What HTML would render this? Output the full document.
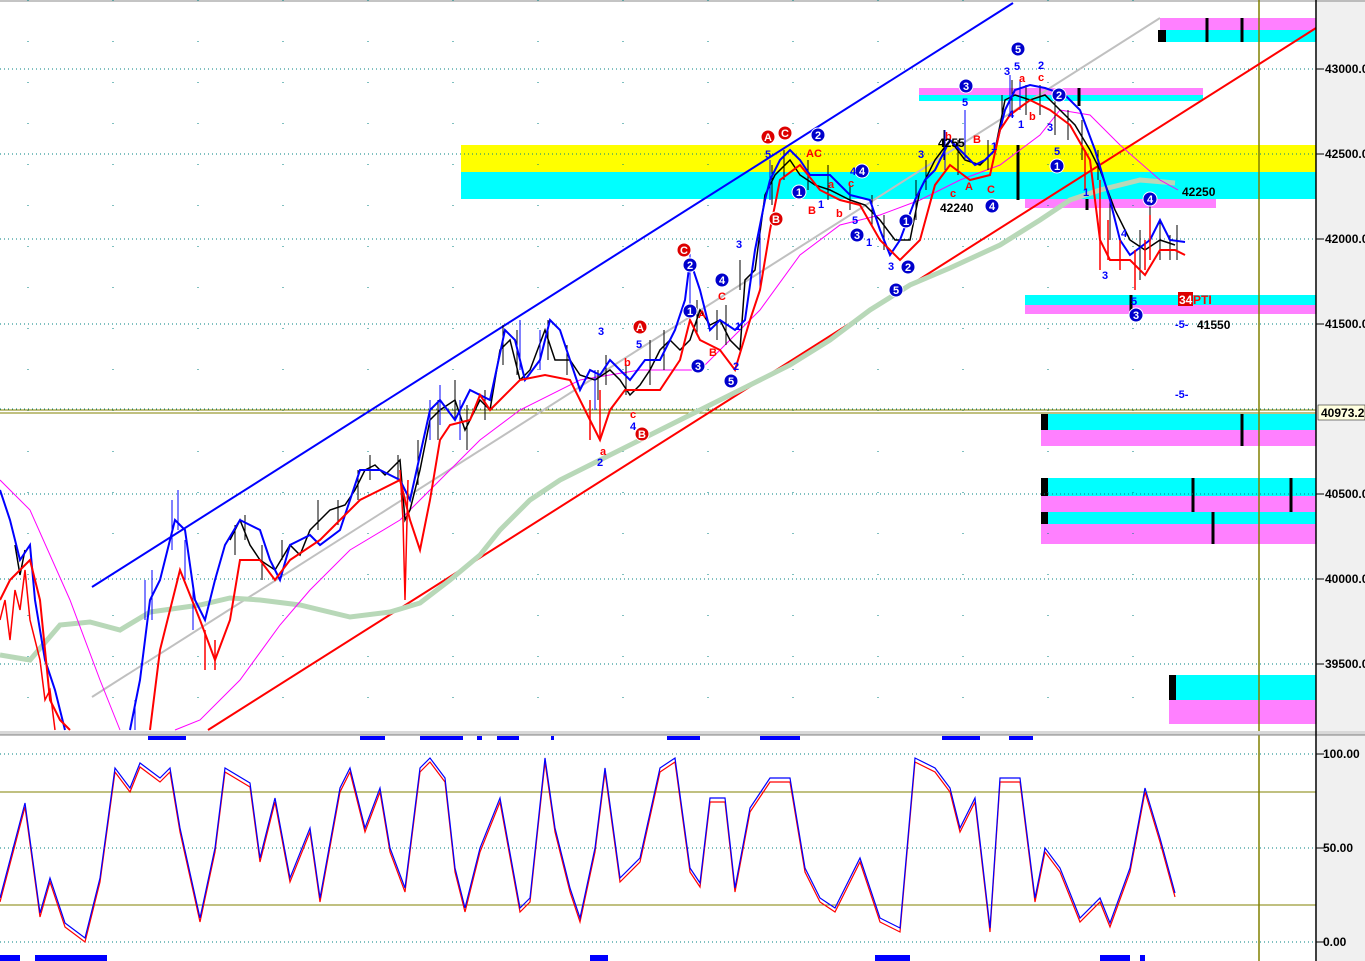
<!DOCTYPE html>
<html><head><meta charset="utf-8"><style>
html,body{margin:0;padding:0;background:#fff;}
svg{display:block;font-family:"Liberation Sans",sans-serif;}
</style></head><body>
<svg width="1365" height="961" viewBox="0 0 1365 961" xmlns="http://www.w3.org/2000/svg">
<rect x="0" y="0" width="1365" height="961" fill="#fff"/>
<rect x="1317" y="0" width="48" height="961" fill="#f0f0f0"/>
<line x1="0" y1="1" x2="1365" y2="1" stroke="#888"/>
<!-- zones -->
<rect x="461" y="145" width="855" height="27" fill="#ffff00"/>
<rect x="461" y="172" width="855" height="27" fill="#00ffff"/>
<rect x="1160" y="18" width="156" height="12" fill="#ff80ff"/>
<rect x="1160" y="30" width="156" height="12" fill="#00ffff"/>
<rect x="1158" y="30" width="8" height="12" fill="#000"/>
<rect x="919" y="88" width="284" height="7" fill="#ff80ff"/>
<rect x="919" y="95" width="284" height="6" fill="#00ffff"/>
<rect x="1025" y="199" width="191" height="9" fill="#ff80ff"/>
<rect x="1025" y="295" width="291" height="10" fill="#00ffff"/>
<rect x="1025" y="305" width="291" height="9" fill="#ff80ff"/>
<rect x="1041" y="414" width="275" height="16" fill="#00ffff"/>
<rect x="1041" y="430" width="275" height="16" fill="#ff80ff"/>
<rect x="1041" y="414" width="7" height="16" fill="#000"/>
<rect x="1041" y="478" width="275" height="18" fill="#00ffff"/>
<rect x="1041" y="496" width="275" height="16" fill="#ff80ff"/>
<rect x="1041" y="512" width="275" height="12" fill="#00ffff"/>
<rect x="1041" y="524" width="275" height="20" fill="#ff80ff"/>
<rect x="1041" y="478" width="7" height="18" fill="#000"/>
<rect x="1041" y="512" width="7" height="12" fill="#000"/>
<rect x="1169" y="675" width="147" height="25" fill="#00ffff"/>
<rect x="1169" y="700" width="147" height="24" fill="#ff80ff"/>
<rect x="1169" y="675" width="7" height="25" fill="#000"/>
<g stroke="#000" stroke-width="3">
<line x1="1207" y1="18" x2="1207" y2="42"/><line x1="1242" y1="18" x2="1242" y2="42"/>
<line x1="1242" y1="414" x2="1242" y2="446"/><line x1="1193" y1="478" x2="1193" y2="512"/>
<line x1="1291" y1="478" x2="1291" y2="512"/><line x1="1213" y1="512" x2="1213" y2="544"/>
<line x1="1079" y1="88" x2="1079" y2="106"/><line x1="1018" y1="145" x2="1018" y2="200"/>
<line x1="1087" y1="199" x2="1087" y2="210"/><line x1="1131" y1="295" x2="1131" y2="316"/>
</g>
<!-- grid -->
<g stroke="#008080" stroke-width="1" stroke-dasharray="1,3">
<line x1="0" y1="69" x2="1316" y2="69"/><line x1="0" y1="154" x2="1316" y2="154"/>
<line x1="0" y1="239" x2="1316" y2="239"/><line x1="0" y1="324" x2="1316" y2="324"/>
<line x1="0" y1="409" x2="1316" y2="409"/><line x1="0" y1="494" x2="1316" y2="494"/>
<line x1="0" y1="579" x2="1316" y2="579"/><line x1="0" y1="664" x2="1316" y2="664"/>
<line x1="0" y1="754" x2="1316" y2="754"/><line x1="0" y1="848" x2="1316" y2="848"/>
<line x1="0" y1="942" x2="1316" y2="942"/>
</g>
<g stroke="#008080" stroke-width="1" stroke-dasharray="1,40">
<line x1="28" y1="0" x2="28" y2="730"/><line x1="113" y1="0" x2="113" y2="730"/><line x1="198" y1="0" x2="198" y2="730"/><line x1="283" y1="0" x2="283" y2="730"/><line x1="368" y1="0" x2="368" y2="730"/><line x1="453" y1="0" x2="453" y2="730"/><line x1="538" y1="0" x2="538" y2="730"/><line x1="623" y1="0" x2="623" y2="730"/><line x1="708" y1="0" x2="708" y2="730"/><line x1="793" y1="0" x2="793" y2="730"/><line x1="878" y1="0" x2="878" y2="730"/><line x1="963" y1="0" x2="963" y2="730"/><line x1="1048" y1="0" x2="1048" y2="730"/><line x1="1133" y1="0" x2="1133" y2="730"/>
</g>
<line x1="1259" y1="0" x2="1259" y2="961" stroke="#808000" stroke-width="1.5"/>
<line x1="0" y1="410" x2="1316" y2="410" stroke="#808000"/>
<line x1="0" y1="413" x2="1316" y2="413" stroke="#808000"/>
<line x1="0" y1="792" x2="1316" y2="792" stroke="#808000"/>
<line x1="0" y1="905" x2="1316" y2="905" stroke="#808000"/>
<!-- channel lines -->
<line x1="92" y1="587" x2="1013" y2="3" stroke="#0000ff" stroke-width="2"/>
<line x1="208" y1="730" x2="1316" y2="28" stroke="#ff0000" stroke-width="2"/>
<line x1="92" y1="697" x2="1160" y2="18" stroke="#c0c0c0" stroke-width="2"/>
<path fill="none" stroke="#b8d8b8" stroke-width="5" d="M0,655 30,660 60,625 90,622 120,630 150,612 200,605 230,598 260,600 300,605 350,617 390,612 420,603 450,580 480,555 500,530 530,500 560,480 600,460 640,440 680,420 720,400 760,380 790,365 830,340 870,310 910,285 950,268 1000,245 1040,220 1070,200 1100,190 1140,180 1175,183"/>
<path fill="none" stroke="#ff00ff" stroke-width="1" d="M0,480 30,510 70,600 100,680 120,730 M175,730 200,720 240,680 280,625 310,590 350,550 400,520 430,490 480,440 520,410 580,380 640,370 700,370 760,310 800,255 840,225 880,215 920,200 960,180 1000,165 1040,135 1060,110 1090,115 1120,145 1160,180 1178,190"/>
<!-- black price -->
<path fill="none" stroke="#000" stroke-width="1.5" d="M15,545 20,575 25,550 M230,540 240,520 250,545 260,560 275,570 290,545 300,555 310,530 320,520 330,510 345,505 355,490 365,470 375,465 385,475 400,460 405,520 410,510 420,470 430,420 440,410 455,400 465,430 480,400 490,410 500,350 510,340 520,380 530,370 545,330 555,360 570,360 580,375 595,380 610,370 620,380 630,395 640,385 650,370 660,350 670,340 680,350 690,340 700,310 710,325 720,320 730,340 740,350 745,280 755,270 765,195 775,175 790,160 800,175 815,185 830,190 850,200 865,205 880,220 895,240 910,240 920,190 935,160 950,140 965,160 980,165 995,150 1005,100 1015,95 1030,100 1045,95 1060,110 1075,125 1090,150 1100,170 1115,210 1130,240 1145,250 1160,240 1175,245"/>
<path fill="none" stroke="#000" stroke-width="1" d="M235,525v30M245,515v25M262,545v35M282,540v20M318,500v30M338,500v25M358,470v30M370,455v25M398,455v25M418,440v45M438,400v40M455,380v40M467,405v45M485,390v30M503,325v40M517,330v45M548,320v40M567,345v30M598,370v30M606,355v30M626,365v30M650,340v45M664,330v40M697,300v35M717,310v30M726,305v40M740,260v30M760,250v40M772,165v40M784,150v30M808,160v30M828,165v35M850,185v25M872,195v30M884,215v35M916,180v40M926,160v30M944,130v30M958,140v35M988,140v30M1002,95v30M1012,80v35M1026,85v30M1040,85v30M1055,95v40M1068,110v30M1082,120v40M1098,150v30M1110,200v40M1140,230v50M1150,200v60M1160,220v40M1170,235v25M1177,225v35"/>
<path fill="none" stroke="#0000ff" stroke-width="2" d="M0,490 10,520 20,560 30,545 35,600 45,660 55,690 65,730 M130,730 140,680 150,600 160,580 175,520 185,530 195,600 205,620 215,580 225,545 240,520 260,530 270,560 280,580 290,545 300,540 310,535 320,545 340,530 360,470 380,470 400,480 410,500 420,455 430,410 440,400 455,420 470,390 490,400 505,330 515,340 525,380 540,360 550,320 560,330 570,360 580,390 590,370 600,375 610,360 630,380 645,360 660,360 675,330 685,300 690,260 700,290 710,330 720,320 735,330 745,320 755,250 765,200 770,180 780,160 790,150 800,160 810,175 830,175 850,195 870,200 880,230 890,255 900,240 915,200 925,180 935,170 950,140 960,150 975,165 985,160 995,150 1005,110 1015,90 1030,85 1045,88 1065,95 1080,110 1095,150 1110,200 1120,240 1130,255 1150,240 1160,220 1170,240 1185,242"/>
<path fill="none" stroke="#0000ff" stroke-width="1" d="M135,700v30M145,580v40M152,570v50M172,500v50M178,490v40M185,540v40M193,590v40M430,400v40M440,385v40M460,400v40M520,320v50M540,330v40M595,370v40M690,250v60M760,230v60M770,160v40M945,130v40M965,110v50M1010,75v40M1020,80v30"/>
<path fill="none" stroke="#ff0000" stroke-width="2" d="M0,600 10,580 20,570 30,560 40,600 50,700 60,720 70,730 M150,730 160,650 170,610 180,570 200,620 215,660 230,620 240,560 260,560 275,580 290,560 320,540 340,520 360,500 380,490 400,480 410,520 420,550 430,500 440,440 450,425 470,420 480,395 490,410 500,400 520,380 545,375 570,380 590,420 600,440 610,410 625,390 640,390 660,390 680,360 690,320 700,340 720,350 735,370 750,320 760,290 770,230 780,180 800,165 820,190 840,200 860,205 880,240 900,260 920,240 935,185 950,165 970,180 990,175 1000,130 1010,115 1030,100 1050,110 1070,125 1090,160 1100,240 1110,260 1130,260 1145,275 1160,250 1175,250 1185,255"/>
<path fill="none" stroke="#ff0000" stroke-width="1.5" d="M0,620 5,600 10,640 15,590 20,610 25,570 30,620 40,660 45,700 50,690 55,730 M400,470 403,520 405,600 408,480 M590,400v40M600,390v50M205,630v40M215,640v30M1100,180v90M1108,220v40M1120,240v30M1135,250v40M1145,240v30M1150,215v45M1085,150v40"/>
<!-- markers -->
<g font-weight="bold" font-size="11" text-anchor="middle">
<g fill="#0000cc" stroke="#fff" stroke-width="1">
<circle cx="818" cy="135" r="7"/><circle cx="1018" cy="49" r="7"/><circle cx="966" cy="86" r="7"/><circle cx="1059" cy="95" r="7"/><circle cx="862" cy="171" r="7"/><circle cx="799" cy="192" r="7"/><circle cx="1057" cy="166" r="7"/><circle cx="1150" cy="199" r="7"/><circle cx="906" cy="221" r="7"/><circle cx="992" cy="206" r="7"/><circle cx="857" cy="235" r="7"/><circle cx="908" cy="267" r="7"/><circle cx="896" cy="290" r="7"/><circle cx="690" cy="265" r="7"/><circle cx="722" cy="280" r="7"/><circle cx="690" cy="311" r="7"/><circle cx="698" cy="366" r="7"/><circle cx="731" cy="381" r="7"/><circle cx="1136" cy="315" r="7"/>
</g>
<g fill="#fff">
<text x="818" y="139">2</text><text x="1018" y="53">5</text><text x="966" y="90">3</text><text x="1059" y="99">2</text><text x="862" y="175">4</text><text x="799" y="196">1</text><text x="1057" y="170">1</text><text x="1150" y="203">4</text><text x="906" y="225">1</text><text x="992" y="210">4</text><text x="857" y="239">3</text><text x="908" y="271">2</text><text x="896" y="294">5</text><text x="690" y="269">2</text><text x="722" y="284">4</text><text x="690" y="315">1</text><text x="698" y="370">3</text><text x="731" y="385">5</text><text x="1136" y="319">3</text>
</g>
<g fill="#dd0000" stroke="#fff" stroke-width="1">
<circle cx="768" cy="137" r="7"/><circle cx="785" cy="133" r="7"/><circle cx="776" cy="219" r="7"/><circle cx="684" cy="250" r="7"/><circle cx="640" cy="327" r="7"/><circle cx="642" cy="434" r="7"/>
</g>
<g fill="#fff">
<text x="768" y="141">A</text><text x="785" y="137">C</text><text x="776" y="223">B</text><text x="684" y="254">C</text><text x="640" y="331">A</text><text x="642" y="438">B</text>
</g>
</g>
<g font-size="11" font-weight="bold" fill="#0000ff">
<text x="598" y="335">3</text><text x="636" y="348">5</text><text x="736" y="248">3</text><text x="630" y="430">4</text><text x="597" y="466">2</text><text x="1004" y="75">3</text><text x="1014" y="70">5</text><text x="1038" y="69">2</text><text x="962" y="106">5</text><text x="918" y="158">3</text><text x="850" y="175">4</text><text x="852" y="224">5</text><text x="866" y="246">1</text><text x="888" y="270">3</text><text x="1054" y="155">5</text><text x="1083" y="196">1</text><text x="1102" y="279">3</text><text x="1121" y="237">4</text><text x="1131" y="305">5</text><text x="1175" y="328">-5-</text><text x="1175" y="398">-5-</text><text x="818" y="208">1</text><text x="733" y="370">2</text><text x="735" y="330">1</text><text x="1008" y="118">4</text><text x="1018" y="128">1</text><text x="1047" y="131">3</text><text x="765" y="158">5</text><text x="991" y="150">1</text>
</g>
<g font-size="11" font-weight="bold" fill="#ff0000">
<text x="600" y="455">a</text><text x="630" y="418">c</text><text x="624" y="366">b</text><text x="698" y="318">A</text><text x="718" y="300">C</text><text x="709" y="356">B</text><text x="806" y="157">AC</text><text x="808" y="214">B</text><text x="836" y="217">b</text><text x="828" y="188">a</text><text x="848" y="187">c</text><text x="965" y="190">A</text><text x="987" y="193">C</text><text x="950" y="197">c</text><text x="945" y="140">b</text><text x="973" y="143">B</text><text x="1019" y="82">a</text><text x="1038" y="81">c</text><text x="1029" y="120">b</text>
</g>
<g font-size="12" font-weight="bold" fill="#000">
<text x="1182" y="196">42250</text><text x="940" y="212">42240</text><text x="938" y="147">4255</text><text x="1197" y="329">41550</text>
</g>
<rect x="1178" y="292" width="15" height="14" fill="#dd0000"/>
<text x="1179" y="304" font-size="12" font-weight="bold" fill="#fff">34</text>
<text x="1193" y="304" font-size="12" font-weight="bold" fill="#ff0000">PTI</text>
<!-- separator -->
<rect x="0" y="731" width="1365" height="4" fill="#d8d8d8"/>
<line x1="0" y1="735" x2="1365" y2="735" stroke="#808080"/>
<g fill="#0000ff">
<rect x="148" y="736" width="38" height="4"/><rect x="360" y="736" width="25" height="4"/><rect x="420" y="736" width="43" height="4"/><rect x="477" y="736" width="5" height="4"/><rect x="497" y="736" width="22" height="4"/><rect x="551" y="736" width="3" height="4"/><rect x="667" y="736" width="33" height="4"/><rect x="760" y="736" width="40" height="4"/><rect x="942" y="736" width="38" height="4"/><rect x="1009" y="736" width="24" height="4"/>
<rect x="0" y="955" width="20" height="6"/><rect x="35" y="955" width="72" height="6"/><rect x="590" y="955" width="18" height="6"/><rect x="875" y="955" width="35" height="6"/><rect x="1100" y="955" width="30" height="6"/><rect x="1140" y="955" width="5" height="6"/>
</g>
<!-- stochastic -->
<polyline fill="none" stroke="#ff0000" stroke-width="1.2" points="0,902 25,807 40,917 50,882 65,927 85,942 100,882 115,772 130,792 140,767 160,782 170,772 180,832 200,922 215,852 225,772 250,787 260,862 275,802 290,882 310,832 320,902 340,792 350,772 365,832 380,792 390,852 405,892 420,772 430,762 445,782 455,872 465,912 480,852 500,802 520,912 530,902 545,762 555,832 570,892 580,922 595,852 605,772 620,882 640,862 660,772 675,762 690,872 700,887 710,802 725,802 735,892 750,812 770,782 790,782 805,872 820,902 835,912 860,862 880,922 900,932 915,762 935,772 950,792 960,832 975,802 990,932 1000,782 1020,782 1035,902 1045,852 1060,872 1080,922 1100,902 1110,927 1130,872 1145,792 1160,842 1175,897"/>
<polyline fill="none" stroke="#0000ff" stroke-width="1.2" points="0,898 25,803 40,913 50,878 65,923 85,938 100,878 115,768 130,788 140,763 160,778 170,768 180,828 200,918 215,848 225,768 250,783 260,858 275,798 290,878 310,828 320,898 340,788 350,768 365,828 380,788 390,848 405,888 420,768 430,758 445,778 455,868 465,908 480,848 500,798 520,908 530,898 545,758 555,828 570,888 580,918 595,848 605,768 620,878 640,858 660,768 675,758 690,868 700,883 710,798 725,798 735,888 750,808 770,778 790,778 805,868 820,898 835,908 860,858 880,918 900,928 915,758 935,768 950,788 960,828 975,798 990,928 1000,778 1020,778 1035,898 1045,848 1060,868 1080,918 1100,898 1110,923 1130,868 1145,788 1160,838 1175,893"/>
<!-- axis -->
<line x1="1316" y1="0" x2="1316" y2="961" stroke="#000" stroke-width="1.5"/>
<g stroke="#000"><line x1="1316" y1="69" x2="1324" y2="69"/><line x1="1316" y1="154" x2="1324" y2="154"/><line x1="1316" y1="239" x2="1324" y2="239"/><line x1="1316" y1="324" x2="1324" y2="324"/><line x1="1316" y1="494" x2="1324" y2="494"/><line x1="1316" y1="579" x2="1324" y2="579"/><line x1="1316" y1="664" x2="1324" y2="664"/><line x1="1316" y1="754" x2="1324" y2="754"/><line x1="1316" y1="848" x2="1324" y2="848"/><line x1="1316" y1="942" x2="1324" y2="942"/></g>
<g font-size="12" font-weight="bold" fill="#000">
<text x="1325" y="73">43000.0</text><text x="1325" y="158">42500.0</text><text x="1325" y="243">42000.0</text><text x="1325" y="328">41500.0</text><text x="1325" y="498">40500.0</text><text x="1325" y="583">40000.0</text><text x="1325" y="668">39500.0</text><text x="1323" y="758">100.00</text><text x="1323" y="852">50.00</text><text x="1323" y="946">0.00</text>
</g>
<rect x="1318" y="405" width="47" height="15" fill="#ffffe0" stroke="#000" stroke-width="0.5"/>
<text x="1321" y="417" font-size="12" font-weight="bold" fill="#000">40973.2</text>
</svg>
</body></html>
